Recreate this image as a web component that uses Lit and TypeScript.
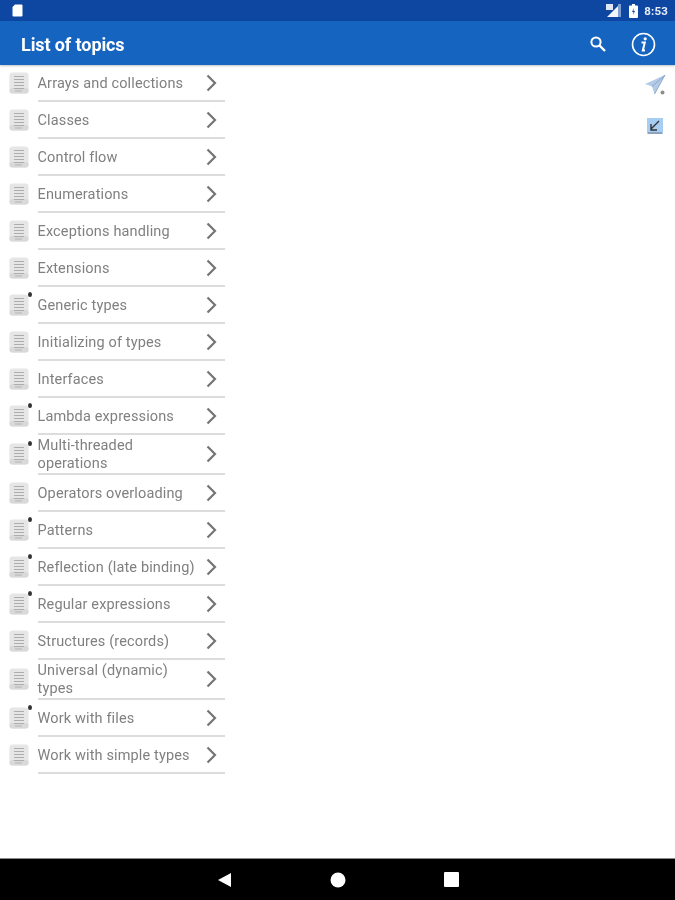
import { LitElement, html, css, svg } from "lit";
import { customElement } from "lit/decorators.js";

const topics: [string, boolean, boolean?][] = [
  ["Arrays and collections", false],
  ["Classes", false],
  ["Control flow", false],
  ["Enumerations", false],
  ["Exceptions handling", false],
  ["Extensions", false],
  ["Generic types", true],
  ["Initializing of types", false],
  ["Interfaces", false],
  ["Lambda expressions", true],
  ["Multi-threaded operations", true, true],
  ["Operators overloading", false],
  ["Patterns", true],
  ["Reflection (late binding)", true],
  ["Regular expressions", true],
  ["Structures (records)", false],
  ["Universal (dynamic) types", false, true],
  ["Work with files", true],
  ["Work with simple types", false],
];

const docIcon = svg`<svg width="20" height="22" viewBox="0 0 20 22">
  <rect x="0.5" y="0.5" width="19" height="21" rx="3" fill="#e6e6e6"/>
  <rect x="0.5" y="16" width="19" height="5.5" rx="2.5" fill="#d9d9d9"/>
  <path d="M5 4.500h10M5 7.500h10M5 10.500h10M5 13.500h10M5 16.500h10" stroke="#adadad" stroke-width="1" fill="none"/>
  <path d="M6 19h7" stroke="#b5b5b5" stroke-width="1" fill="none"/>
</svg>`;

@customElement("app-root")
export class AppRoot extends LitElement {
  static styles = css`
    :host { display: block; height: 900px; font-family: Roboto, "Liberation Sans", sans-serif; background: #fff; }
    .page { height: 900px; display: flex; flex-direction: column; filter: blur(0.45px); }
    .status { height: 21px; background: #0d47a1; display: flex; align-items: center; padding: 0 7px 0 12px; color: #fff; flex: none; }
    .status .grow, .bar .grow { flex: 1; }
    .clock { font-size: 11.5px; font-weight: 700; margin-left: 6px; color: #e8eef8; letter-spacing: 0.2px; }
    .status svg { display: block; }
    .status .sig { margin-right: 8px; }
    .bar { height: 44px; background: #1565c0; display: flex; align-items: center; padding: 2px 19px 0 21px; box-sizing: border-box; flex: none; box-shadow: 0 1px 2px rgba(0,0,0,.25); position: relative; }
    .title { color: #fff; font-size: 18px; font-weight: 700; letter-spacing: -0.1px; }
    .bar .search { margin-right: 24px; display: block; }
    .bar .info { display: block; }
    .main { flex: 1; display: flex; justify-content: space-between; min-height: 0; }
    .list { width: 225px; display: flex; flex-direction: column; }
    .row { display: flex; align-items: center; min-height: 37px; box-sizing: border-box; flex: none; }
    .ic { width: 37.5px; flex: none; padding: 0 0 2px 9px; box-sizing: border-box; position: relative; display: flex; }
    .ic svg { display: block; }
    .dot { position: absolute; left: 28px; top: -2px; width: 4px; height: 5px; border-radius: 50%; background: #333; }
    .body { flex: 1; align-self: stretch; display: flex; align-items: center; border-bottom: 2px solid #dcdcdc; min-width: 0; }
    .label { flex: 1; min-width: 0; font-size: 14.5px; line-height: 18px; color: #808080; padding: 2px 8px 0 0; letter-spacing: 0.14px; }
    .chev { flex: none; display: block; margin-right: 8px; }
    .multi { min-height: 40px; }
    .side { display: flex; flex-direction: column; align-items: center; width: 40px; padding-top: 9px; gap: 22px; }
    .side svg { display: block; }
    .nav { height: 42px; background: #000; border-top: 1px solid #8a8a8a; box-sizing: border-box; flex: none; display: flex; align-items: center; justify-content: center; gap: 98px; }
    .nav svg { display: block; }
  `;

  render() {
    return html`<div class="page">
      <div class="status">
        <svg width="11" height="13" viewBox="0 0 11 13"><path d="M3 0.500h6.500a1 1 0 0 1 1 1v10a1 1 0 0 1-1 1h-8a1 1 0 0 1-1-1V3z" fill="#fff"/></svg>
        <span class="grow"></span>
        <svg class="sig" width="15" height="13" viewBox="0 0 15 13"><path d="M12 2v11H1z" fill="#fff" opacity=".95"/><path d="M12 0v13h3V0z" fill="#7f9fd0"/><rect x="0" y="0" width="7" height="6" fill="#dfe7f4"/></svg>
        <svg width="9" height="14" viewBox="0 0 9 14"><path d="M3 0h3v1.500h2a1 1 0 0 1 1 1V13a1 1 0 0 1-1 1H1a1 1 0 0 1-1-1V2.500a1 1 0 0 1 1-1h2z" fill="#fff"/><path d="M5 4L3 8h1.500L4 11l2-4H4.500z" fill="#0d47a1"/></svg>
        <span class="clock">8:53</span>
      </div>
      <div class="bar">
        <span class="title">List of topics</span>
        <span class="grow"></span>
        <svg class="search" width="18" height="18" viewBox="0 0 18 18"><circle cx="7" cy="7" r="4.600" fill="none" stroke="#fff" stroke-width="2"/><path d="M10.500 10.500L16 16" stroke="#fff" stroke-width="2.400"/></svg>
        <svg class="info" width="25" height="25" viewBox="0 0 25 25"><circle cx="12.500" cy="12.500" r="11" fill="none" stroke="#fff" stroke-width="1.600"/><circle cx="14.200" cy="6.800" r="1.600" fill="#fff"/><path d="M10.500 10.500h3.300l-2 8h2.200" fill="none" stroke="#fff" stroke-width="2"/></svg>
      </div>
      <div class="main">
        <div class="list">
          ${topics.map(([t, dot, multi]) => html`<div class="row ${multi ? "multi" : ""}">
            <div class="ic">${docIcon}${dot ? html`<span class="dot"></span>` : ""}</div>
            <div class="body">
              <span class="label">${t}</span>
              <svg class="chev" width="11" height="18" viewBox="0 0 11 18"><path d="M1.500 1.500L9 9l-7.500 7.500" fill="none" stroke="#757575" stroke-width="2.200"/></svg>
            </div>
          </div>`)}
        </div>
        <div class="side">
          <svg width="22" height="22" viewBox="0 0 22 22"><path d="M21 1L1 10l7 2.500L10.500 20z" fill="#b4cbe8"/><path d="M21 1L8 12.500M21 1L10.500 20" stroke="#8aa6c9" stroke-width="1" fill="none"/><circle cx="18.500" cy="18.500" r="2" fill="#8c8c8c"/></svg>
          <svg width="16" height="16" viewBox="0 0 16 16"><rect width="16" height="16" fill="#a8cdf2"/><path d="M12 3L4 11M4 6v6h6" stroke="#333" stroke-width="1.400" fill="none"/><path d="M1 15h14" stroke="#7b8a99" stroke-width="1.200"/></svg>
        </div>
      </div>
      <div class="nav">
        <svg width="15" height="16" viewBox="0 0 15 16"><path d="M1 8L14 1v14z" fill="#fff"/></svg>
        <svg width="16" height="16" viewBox="0 0 16 16"><circle cx="8" cy="8" r="7.500" fill="#fff"/></svg>
        <svg width="15" height="15" viewBox="0 0 15 15"><rect width="15" height="15" rx="1" fill="#fff"/></svg>
      </div>
    </div>`;
  }
}
